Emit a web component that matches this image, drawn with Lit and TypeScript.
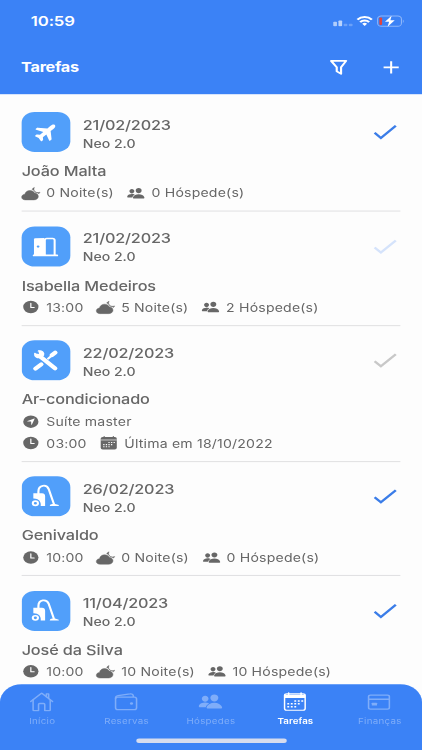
import { LitElement, html, svg, css, nothing } from "lit";
import { customElement, property } from "lit/decorators.js";

const PEOPLE =
  "M336 256c-20.56 0-40.56-9.18-56.32-25.84-15.13-16.25-24.37-37.92-26-61-1.74-24.62 5.77-47.26 21.14-63.76S312 80 336 80c23.83 0 45.38 9.06 60.7 25.52 15.47 16.62 23 39.22 21.26 63.63-1.67 23.11-10.9 44.77-26 61C376.44 246.82 356.45 256 336 256zm131.83 176H204.18a27.71 27.71 0 0 1-22-10.67 30.22 30.22 0 0 1-5.26-25.79c8.42-33.81 29.28-61.85 60.32-81.08C264.79 297.4 299.86 288 336 288c36.85 0 71 9 98.71 26.05 31.11 19.13 52 47.33 60.38 81.55a30.27 30.27 0 0 1-5.32 25.78A27.68 27.68 0 0 1 467.83 432zM147 260c-35.19 0-66.13-32.72-69-72.93-1.42-20.6 5-39.65 18-53.62 12.86-13.83 31-21.45 51-21.45s38 7.66 50.93 21.57c13.1 14.08 19.5 33.09 18 53.52-2.87 40.2-33.8 72.91-68.93 72.91zm65.66 31.45c-17.59-8.6-40.42-12.9-65.65-12.9-29.46 0-58.07 7.68-80.57 21.62-25.51 15.83-42.67 38.88-49.6 66.71a27.39 27.39 0 0 0 4.79 23.36A25.32 25.32 0 0 0 41.72 400h111a8 8 0 0 0 7.87-6.57c.11-.63.25-1.26.41-1.88 8.48-34.06 28.35-62.84 57.71-83.82a8 8 0 0 0-.63-13.39c-1.57-.92-3.37-1.89-5.42-2.89z";

const CLOUD =
  "M340 480H106c-29.5 0-54.92-7.83-73.53-22.64C11.23 440.44 0 415.35 0 384.8c0-26.66 10.08-49.8 29.14-66.91 15.24-13.68 36.17-23.21 59-26.84.06 0 .08 0 .09-.05 6.44-39 23.83-72.09 50.31-95.68A140.24 140.24 0 0 1 232 160c30.23 0 58.48 9.39 81.71 27.17a142.24 142.24 0 0 1 45.36 60.66c29.41 4.82 54.72 17.11 73.19 35.54C453 304.11 464 331.71 464 363.2c0 32.85-13.13 62.87-37 84.52C404.11 468.54 373.2 480 340 480z";
const MOON =
  "M381.55 220.64c43.37 10.94 76.5 32.2 95.48 52.19A149.9 149.9 0 0 0 512 218.3c-17.4 8.7-41 13.3-61.5 13.3-70.5 0-108.8-38.2-108.8-108.8 0-20.6 5.1-44.5 13.6-61.9-30 12-54 32-66 62 40 14 73 44 92.25 97.74z";

const PLANE =
  "M186.62 464H160a16 16 0 0 1-14.57-22.6l64.46-142.25L113.1 297l-35.3 42.77C71.07 348.23 65.7 352 52 352H34.08a17.66 17.66 0 0 1-14.7-7.06c-2.38-3.21-4.72-8.65-2.44-16.41l19.82-71c.15-.53.33-1.06.53-1.58a.38.38 0 0 0 0-.15 14.82 14.82 0 0 1-.53-1.59l-19.84-71.45c-2.15-7.61.2-12.93 2.56-16.06a16.83 16.83 0 0 1 13.6-6.7H52c10.23 0 20.16 4.59 26 12l34.57 42.05 97.32-1.44-64.44-142A16 16 0 0 1 160 48h26.91a25 25 0 0 1 19.35 9.8l125.05 152 57.77-1.52c4.23-.23 15.95-.31 18.66-.31C463 208 496 225.94 496 256c0 9.46-3.78 27-29.07 38.16-14.93 6.6-34.85 9.94-59.21 9.94-2.68 0-14.37-.08-18.66-.31l-57.76-1.54-125.36 152a25 25 0 0 1-19.32 9.75z";

const dots = (fill: string, size: number) =>
  [
    [264, 240], [336, 240], [408, 240],
    [120, 312], [192, 312], [264, 312], [336, 312],
    [120, 384], [192, 384], [264, 384],
  ].map(([x, y]) => svg`<rect x=${x - size / 2} y=${y - size / 2} width=${size} height=${size} rx="8" fill=${fill}></rect>`);

/* 512-unit glyphs used in detail lines and the tab bar */
const glyphs: Record<string, unknown> = {
  night: svg`<g fill="currentColor" stroke="currentColor" stroke-width="14"><path d=${CLOUD}></path><path d=${MOON}></path></g>`,
  people: svg`<path fill="currentColor" d=${PEOPLE}></path>`,
  clock: svg`<circle cx="256" cy="256" r="212" fill="currentColor"></circle>
    <path d="M256 124v148h92" fill="none" stroke="#fff" stroke-width="34" stroke-linecap="round" stroke-linejoin="round"></path>`,
  place: svg`<circle cx="256" cy="256" r="212" fill="currentColor"></circle>
    <path d="M362 160L286 354c-5 12-20 10-20-4V262a10 10 0 0 0-10-10h-88c-14 0-16-16-4-21l190-80c7-3 11 2 8 9z" fill="#fff"></path>`,
  calendar: svg`<rect x="32" y="56" width="448" height="420" rx="56" fill="currentColor"></rect>
    <path d="M128 40v40M384 40v40" stroke="currentColor" stroke-width="34" stroke-linecap="round"></path>
    <path d="M32 154h448" stroke="#fff" stroke-width="20"></path>${dots("#fff", 38)}`,
  home: svg`<g fill="none" stroke="currentColor" stroke-width="32" stroke-linecap="round" stroke-linejoin="round">
    <path d="M80 212v252a16 16 0 0 0 16 16h96V328a24 24 0 0 1 24-24h80a24 24 0 0 1 24 24v152h96a16 16 0 0 0 16-16V212"></path>
    <path d="M480 256L266.9 52a16 16 0 0 0-21.8 0L32 256"></path><path d="M400 179V64h-48v69"></path></g>`,
  wallet: svg`<g fill="none" stroke="currentColor" stroke-width="32" stroke-linejoin="round">
    <rect x="40" y="144" width="432" height="316" rx="48"></rect>
    <path d="M405 144v-30c0-36-32-58-68-49L91 109c-30 6-51 28-51 60v24"></path></g>
    <circle cx="368" cy="304" r="32" fill="currentColor"></circle>`,
  schedule: svg`<rect x="44" y="62" width="424" height="412" rx="44" fill="none" stroke="currentColor" stroke-width="30"></rect>
    <path d="M44 84h424v80H44z" fill="currentColor"></path>
    <path d="M128 40v40M384 40v40" stroke="currentColor" stroke-width="32" stroke-linecap="round"></path>${dots("currentColor", 40)}`,
  card: svg`<rect x="36" y="92" width="428" height="352" rx="40" fill="none" stroke="currentColor" stroke-width="32"></rect>
    <path d="M36 198h428" stroke="currentColor" stroke-width="36"></path>
    <rect x="102" y="288" width="108" height="68" rx="10" fill="currentColor"></rect>`,
};

/* 45-unit glyphs drawn over the rounded category tile */
const tiles: Record<string, unknown> = {
  plane: svg`<path fill="#fff" transform="translate(22.9 22.4) rotate(-45) scale(.0455) translate(-256 -256)" d=${PLANE}></path>`,
  door: svg`<path fill="#fff" d="M12.4 13.2l8.6-.5v19.6h-9.6V14.4c0-.7.4-1.1 1-1.2z"></path>
    <circle cx="15.2" cy="22.5" r="1.3" fill="#519ffa"></circle>
    <path d="M21.4 32V15.4c0-1.2.7-2 1.9-2h5.3c1.2 0 1.9.8 1.9 2V32" fill="none" stroke="#fff" stroke-width="1.9"></path>
    <path d="M11.2 32.4h21.6" stroke="#fff" stroke-width="1.9" stroke-linecap="round"></path>`,
  tools: svg`<g fill="none" stroke="#fff" stroke-linecap="round">
    <path d="M17 18L30.9 31.6" stroke-width="4.3"></path>
    <path d="M12.1 14.6c-.6 3.6 2.4 5.9 5.6 4.7l2.5-2.5c.9-3-1.3-5.5-4.6-5" fill="#fff" stroke-width="1.2" stroke-linejoin="round"></path>
    <path d="M12.8 31.9L18.1 27" stroke-width="4.3"></path>
    <path d="M24.5 20.6L27.7 17.3" stroke-width="2.2"></path>
    <path d="M28 16.7L31 13.8" stroke-width="4.4"></path></g>
    <path d="M11.5 11.5l4 1 .6 2.900-2.900-.5z" fill="#519ffa"></path>`,
  vacuum: svg`<path d="M15.500 20.500V17c0-7.600 7.600-8.300 9.500-2.600L29.900 31.500" fill="none" stroke="#fff" stroke-width="2"></path>
    <path d="M10.800 19h8c2 0 2.900 1.200 2.900 3.200v11.200h-4.100c.8-5-2.300-8.600-6.800-8.300z" fill="#fff"></path>
    <circle cx="12.700" cy="30.300" r="2.400" fill="none" stroke="#fff" stroke-width="1.900"></circle>
    <path d="M26 33.400c0-1.500 1-2.300 2.400-2.300h2.500l3.400 1.200v1.100z" fill="#fff"></path>`,
};

const glyph = (name: string, cls: string) => html`<svg class=${cls} viewBox="0 0 512 512">${glyphs[name]}</svg>`;

interface Detail { icon: string; text: string }
interface Task {
  tile: string;
  date: string;
  unit: string;
  name: string;
  check: "done" | "soft" | "off";
  lines: Detail[][];
}

const tasks: Task[] = [
  { tile: "plane", date: "21/02/2023", unit: "Neo 2.0", name: "João Malta", check: "done",
    lines: [[{ icon: "night", text: "0 Noite(s)" }, { icon: "people", text: "0 Hóspede(s)" }]] },
  { tile: "door", date: "21/02/2023", unit: "Neo 2.0", name: "Isabella Medeiros", check: "soft",
    lines: [[{ icon: "clock", text: "13:00" }, { icon: "night", text: "5 Noite(s)" }, { icon: "people", text: "2 Hóspede(s)" }]] },
  { tile: "tools", date: "22/02/2023", unit: "Neo 2.0", name: "Ar-condicionado", check: "off",
    lines: [[{ icon: "place", text: "Suíte master" }],
      [{ icon: "clock", text: "03:00" }, { icon: "calendar", text: "Última em 18/10/2022" }]] },
  { tile: "vacuum", date: "26/02/2023", unit: "Neo 2.0", name: "Genivaldo", check: "done",
    lines: [[{ icon: "clock", text: "10:00" }, { icon: "night", text: "0 Noite(s)" }, { icon: "people", text: "0 Hóspede(s)" }]] },
  { tile: "vacuum", date: "11/04/2023", unit: "Neo 2.0", name: "José da Silva", check: "done",
    lines: [[{ icon: "clock", text: "10:00" }, { icon: "night", text: "10 Noite(s)" }, { icon: "people", text: "10 Hóspede(s)" }]] },
];

@customElement("task-row")
class TaskRow extends LitElement {
  @property({ attribute: false }) task!: Task;

  static styles = css`
    :host { display: block; padding: 16.5px 0 8px; border-bottom: 1px solid #dcdcde; color: #676767; }
    .head { display: flex; height: 45px; }
    .tile { width: 45px; height: 45px; border-radius: 12px; background: #519ffa; flex: none; }
    .tile svg { display: block; width: 45px; height: 45px; }
    .info { margin-left: 11.5px; flex: 1; padding-top: 3.5px; font-weight: 500; }
    .date { font-size: 15px; line-height: 21px; letter-spacing: -.18px; }
    .unit { font-size: 13px; line-height: 20px; letter-spacing: 0; }
    .check { width: 22px; height: 20px; margin: 13px 3.4px 0 0; }
    .done { color: #3b7de8; }
    .soft { color: #d5e3fb; }
    .off { color: #c8c8c8; }
    .name { margin-top: 10px; font-size: 15px; line-height: 24px; font-weight: 500; letter-spacing: -.1px; }
    .line { display: flex; align-items: center; gap: 12px; height: 24px; font-size: 13px; letter-spacing: .18px; }
    .line + .line { margin-top: .5px; }
    .detail { display: flex; align-items: center; gap: 5.8px; white-space: nowrap; }
    .glyph { width: 17px; height: 17px; flex: none; overflow: visible; }
  `;

  render() {
    const t = this.task;
    return html`
      <div class="head">
        <div class="tile"><svg viewBox="0 0 45 45">${tiles[t.tile]}</svg></div>
        <div class="info">
          <div class="date">${t.date}</div>
          <div class="unit">${t.unit}</div>
        </div>
        <svg class="check ${t.check}" viewBox="0 0 22 20">
          <path d="M1.2 10.5L7 16.2L20.8 2.6" fill="none" stroke="currentColor" stroke-width="2.4"></path>
        </svg>
      </div>
      <div class="name">${t.name}</div>
      ${t.lines.map((l) => html`<div class="line">
        ${l.map((d) => html`<span class="detail">${glyph(d.icon, "glyph")}<span>${d.text}</span></span>`)}
      </div>`)}
    `;
  }
}

const tabs = [
  { icon: "home", label: "Início" },
  { icon: "wallet", label: "Reservas" },
  { icon: "people", label: "Hóspedes" },
  { icon: "schedule", label: "Tarefas", active: true },
  { icon: "card", label: "Finanças" },
];

@customElement("app-root")
class AppRoot extends LitElement {
  static styles = css`
    :host { display: block; width: 422px; height: 750px; overflow: hidden; background: #fdfdfd; }
    /* 390x844 device canvas fitted to the window */
    .screen {
      width: 390px; height: 844px; transform: scale(1.08205, .88863); transform-origin: 0 0;
      display: flex; flex-direction: column; overflow: hidden; box-sizing: border-box;
      font-family: Inter, "Liberation Sans", sans-serif;
    }
    .top { flex: none; height: 106px; background: #3b82f6; color: #fff; }
    .status { display: flex; align-items: center; height: 47px; padding: 0 15.7px 0 28.5px; }
    .time { flex: 1; font-size: 15.5px; font-weight: 600; letter-spacing: -.15px; }
    .status svg { display: block; }
    .bars { width: 20px; height: 12px; margin-right: 2.5px; }
    .wifi { width: 16px; height: 13px; margin-right: 3.3px; }
    .battery { width: 26px; height: 14px; }
    .bar { display: flex; align-items: center; height: 57px; padding: 0 18.8px 0 19.5px; }
    .title { flex: 1; font-size: 15px; font-weight: 700; letter-spacing: -.25px; }
    .action { width: 20px; height: 20px; }
    .filter { margin-right: 28.5px; }
    .list { flex: 1; min-height: 0; overflow: hidden; padding: 3.8px 20px 0; }
    .tabs {
      flex: none; height: 74.3px; margin-top: -20px; background: #3b82f6; position: relative;
      border-radius: 20px 20px 0 0; display: grid; grid-template-columns: repeat(5, 1fr);
      grid-template-rows: 52px 1fr;
    }
    .tab { display: flex; flex-direction: column; align-items: center; padding-top: 8.4px; color: #7fadf9; font-size: 9px; letter-spacing: .25px; }
    .tab svg { display: block; width: 23px; height: 23px; margin-left: -1px; }
    .label { margin-top: 4.6px; line-height: 12px; }
    .active { color: #fff; font-weight: 600; letter-spacing: .05px; }
    .grip { grid-column: 1 / -1; justify-self: center; align-self: start; margin-top: 9.5px; width: 139px; height: 5px; border-radius: 3px; background: #d6dcee; }
  `;

  render() {
    return html`<div class="screen">
      <div class="top">
        <div class="status">
          <span class="time">10:59</span>
          <svg class="bars" viewBox="0 0 20 12" fill="#fff">
            <rect x="1" y="6.5" width="3.4" height="5" rx=".8" opacity=".6"></rect>
            <rect x="5.8" y="5" width="3.4" height="6.5" rx=".8" opacity=".65"></rect>
            <rect x="10.6" y="8.8" width="3.4" height="2.7" rx=".8" opacity=".25"></rect>
            <rect x="15.4" y="8.8" width="3.4" height="2.7" rx=".8" opacity=".25"></rect>
          </svg>
          <svg class="wifi" viewBox="0 0 17 13" fill="none" stroke="#fff" stroke-width="2.4">
            <path d="M1.4 5a9.8 9.8 0 0 1 14.2 0M4.1 8a6.1 6.1 0 0 1 8.800 0"></path>
            <path d="M8.5 12.6l2.4-2.6a3.4 3.4 0 0 0-4.8 0z" fill="#fff" stroke="none"></path>
          </svg>
          <svg class="battery" viewBox="0 0 26 14">
            <rect x="1" y="1" width="22" height="11.6" rx="3.4" fill="none" stroke="#8db6fa"></rect>
            <path d="M24.3 5v3.8c1.1-.4 1.1-3.4 0-3.8z" fill="#8db6fa"></path>
            <rect x="2.6" y="2.6" width="2.5" height="8.4" rx="1" fill="#e0443e"></rect>
            <path d="M13.9 .8L7.800 7.600h3.800l-1.400 5.500 6.600-7.400h-4z" fill="#fff"></path>
          </svg>
        </div>
        <div class="bar">
          <span class="title">Tarefas</span>
          <svg class="action filter" viewBox="0 0 20 20" fill="none" stroke="#fff" stroke-width="2" stroke-linejoin="round">
            <path d="M3 2.5h13.900L12.200 9.700v7.400l-4-2.800V9.700z"></path>
          </svg>
          <svg class="action" viewBox="0 0 20 20" stroke="#fff" stroke-width="1.9">
            <path d="M3.5 9.800h14M10.500 2.800v14"></path>
          </svg>
        </div>
      </div>
      <div class="list">${tasks.map((t) => html`<task-row .task=${t}></task-row>`)}</div>
      <div class="tabs">
        ${tabs.map((t) => html`<div class="tab ${t.active ? "active" : ""}">
          ${glyph(t.icon, "icon")}<span class="label">${t.label ?? nothing}</span>
        </div>`)}
        <div class="grip"></div>
      </div>
    </div>`;
  }
}
